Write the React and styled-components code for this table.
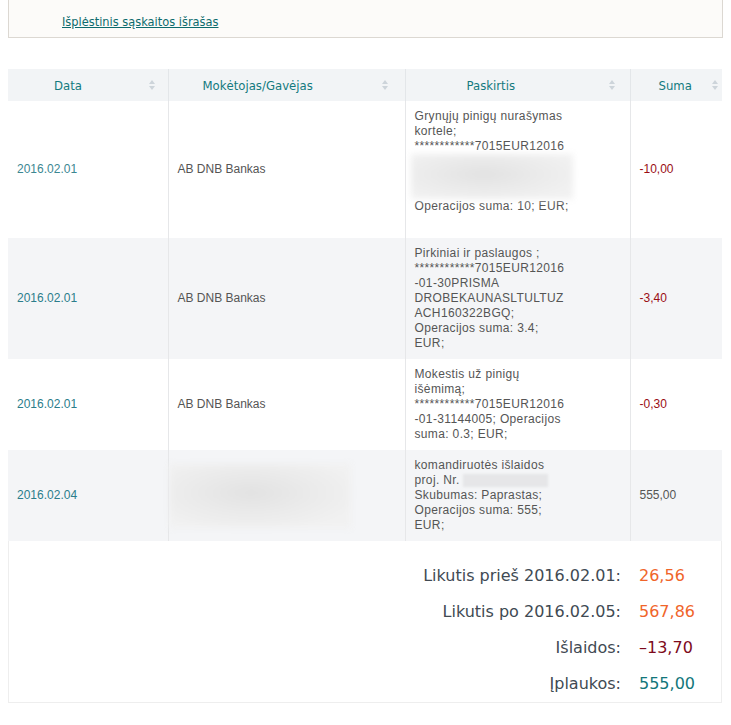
import styled, { createGlobalStyle } from 'styled-components'

const GlobalStyle = createGlobalStyle`
  body {
    margin: 0 8px;
    background: #fff;
    font-family: "Liberation Sans", Arial, sans-serif;
  }
`

// viršutinis blokas su nuoroda
const TopPanel = styled.div`
  height: 38px;
  box-sizing: border-box;
  background: #fcfbf9;
  border: 1px solid #dcd8d2;
  border-top: none;
  padding: 12px 0 0 53px;
`

const Link = styled.a`
  font-family: "DejaVu Sans Condensed", "DejaVu Sans", sans-serif;
  font-stretch: condensed;
  font-size: 12.7px;
  line-height: 16px;
  color: #0d6b6d;
  text-decoration: underline;
  cursor: pointer;
`

const Table = styled.table`
  margin-top: 31px;
  width: 714px;
  table-layout: fixed;
  border-collapse: collapse;
  border-spacing: 0;
`

const Th = styled.th`
  height: 32px;
  padding: 0;
  background: #f2f4f6;
  border-left: 1px solid #e3e6e9;
  font-weight: normal;
  text-align: left;
  &:first-child {
    border-left: none;
  }
`

const ThInner = styled.div`
  display: flex;
  align-items: center;
  padding-left: ${(props) => props.left}px;
  padding-right: ${(props) => props.right}px;
  font-family: "DejaVu Sans Condensed", "DejaVu Sans", sans-serif;
  font-stretch: condensed;
  font-size: 13px;
  color: #137a7e;
`

const SortIcon = styled.svg`
  margin-left: auto;
  width: 6px;
  height: 10px;
`

const Row = styled.tr`
  background: ${(props) => (props.striped ? '#f4f5f7' : '#fff')};
`

const Td = styled.td`
  padding: 8px 9px;
  vertical-align: middle;
  font-family: "Liberation Sans", Arial, sans-serif;
  font-size: 12px;
  line-height: 15px;
  letter-spacing: ${(props) => (props.wide ? '0.35px' : 'normal')};
  color: ${(props) => props.color || '#555'};
  border-left: 1px solid #e6e7e9;
  &:first-child {
    border-left: none;
  }
`

const Line = styled.div`
  white-space: nowrap;
  min-height: ${(props) => props.h || 15}px;
`

const BlurBlock = styled.div`
  width: ${(props) => props.w}px;
  height: ${(props) => props.h}px;
  margin-left: ${(props) => props.ml || 0}px;
  background: radial-gradient(ellipse at 45% 45%, #e2e2e2 0%, #ebebeb 45%, #f1f1f1 80%);
  filter: blur(3px);
`

const BlurInline = styled.span`
  display: inline-block;
  vertical-align: middle;
  width: 85px;
  height: 13px;
  margin-left: 3px;
  background: #e6e6e8;
  filter: blur(1px);
`

const Summary = styled.div`
  display: grid;
  grid-template-columns: 1fr 82px;
  column-gap: 18px;
  padding-top: 17px;
  width: 714px;
  box-sizing: border-box;
  border: 1px solid #eeeeee;
  border-top: none;
  font-family: "DejaVu Sans", sans-serif;
  font-size: 16px;
  line-height: 36px;
`

const Label = styled.div`
  text-align: right;
  color: #414a53;
`

const Value = styled.div`
  color: ${(props) => props.color};
`

const Sort = () => (
  <SortIcon viewBox="0 0 6 10">
    <path d="M3 0 L6 4 L0 4 Z" fill="#cdd4da" />
    <path d="M3 10 L6 6 L0 6 Z" fill="#cdd4da" />
  </SortIcon>
)

const headers = [
  { title: 'Data', left: 46, right: 13 },
  { title: 'Mokėtojas/Gavėjas', left: 34, right: 17 },
  { title: 'Paskirtis', left: 61, right: 15 },
  { title: 'Suma', left: 28, right: 4 },
]

function App() {
  return (
    <>
      <GlobalStyle />
      <TopPanel>
        <Link>Išplėstinis sąskaitos išrašas</Link>
      </TopPanel>

      <Table>
        <colgroup>
          <col style={{ width: 160 }} />
          <col style={{ width: 237 }} />
          <col style={{ width: 225 }} />
          <col style={{ width: 92 }} />
        </colgroup>
        <thead>
          <tr>
            {headers.map((h) => (
              <Th key={h.title}>
                <ThInner left={h.left} right={h.right}>
                  {h.title}
                  <Sort />
                </ThInner>
              </Th>
            ))}
          </tr>
        </thead>
        <tbody>
          <Row>
            <Td color="#3c8792">2016.02.01</Td>
            <Td>AB DNB Bankas</Td>
            <Td wide>
              <Line>Grynųjų pinigų nurašymas</Line>
              <Line>kortele;</Line>
              <Line>************7015EUR12016</Line>
              <BlurBlock w={162} h={45} ml={-4} />
              <Line>Operacijos suma: 10; EUR;</Line>
              <Line h={16} />
            </Td>
            <Td color="#9a0d14">-10,00</Td>
          </Row>
          <Row striped>
            <Td color="#2b7d8b">2016.02.01</Td>
            <Td>AB DNB Bankas</Td>
            <Td wide>
              <Line>Pirkiniai ir paslaugos ;</Line>
              <Line>************7015EUR12016</Line>
              <Line>-01-30PRISMA</Line>
              <Line>DROBEKAUNASLTULTUZ</Line>
              <Line>ACH160322BGQ;</Line>
              <Line>Operacijos suma: 3.4;</Line>
              <Line>EUR;</Line>
            </Td>
            <Td color="#9a0d14">-3,40</Td>
          </Row>
          <Row>
            <Td color="#2b7d8b">2016.02.01</Td>
            <Td>AB DNB Bankas</Td>
            <Td wide>
              <Line>Mokestis už pinigų</Line>
              <Line>išėmimą;</Line>
              <Line>************7015EUR12016</Line>
              <Line>-01-31144005; Operacijos</Line>
              <Line>suma: 0.3; EUR;</Line>
            </Td>
            <Td color="#9a0d14">-0,30</Td>
          </Row>
          <Row striped>
            <Td color="#2b7d8b">2016.02.04</Td>
            <Td>
              <BlurBlock w={182} h={64} ml={-9} />
            </Td>
            <Td wide>
              <Line>komandiruotės išlaidos</Line>
              <Line>
                proj. Nr.
                <BlurInline />
              </Line>
              <Line>Skubumas: Paprastas;</Line>
              <Line>Operacijos suma: 555;</Line>
              <Line>EUR;</Line>
            </Td>
            <Td>555,00</Td>
          </Row>
        </tbody>
      </Table>

      <Summary>
        <Label>Likutis prieš 2016.02.01:</Label>
        <Value color="#f0652a">26,56</Value>
        <Label>Likutis po 2016.02.05:</Label>
        <Value color="#f0652a">567,86</Value>
        <Label>Išlaidos:</Label>
        <Value color="#7d0a1c">–13,70</Value>
        <Label>Įplaukos:</Label>
        <Value color="#12767a">555,00</Value>
      </Summary>
    </>
  )
}

export default App
